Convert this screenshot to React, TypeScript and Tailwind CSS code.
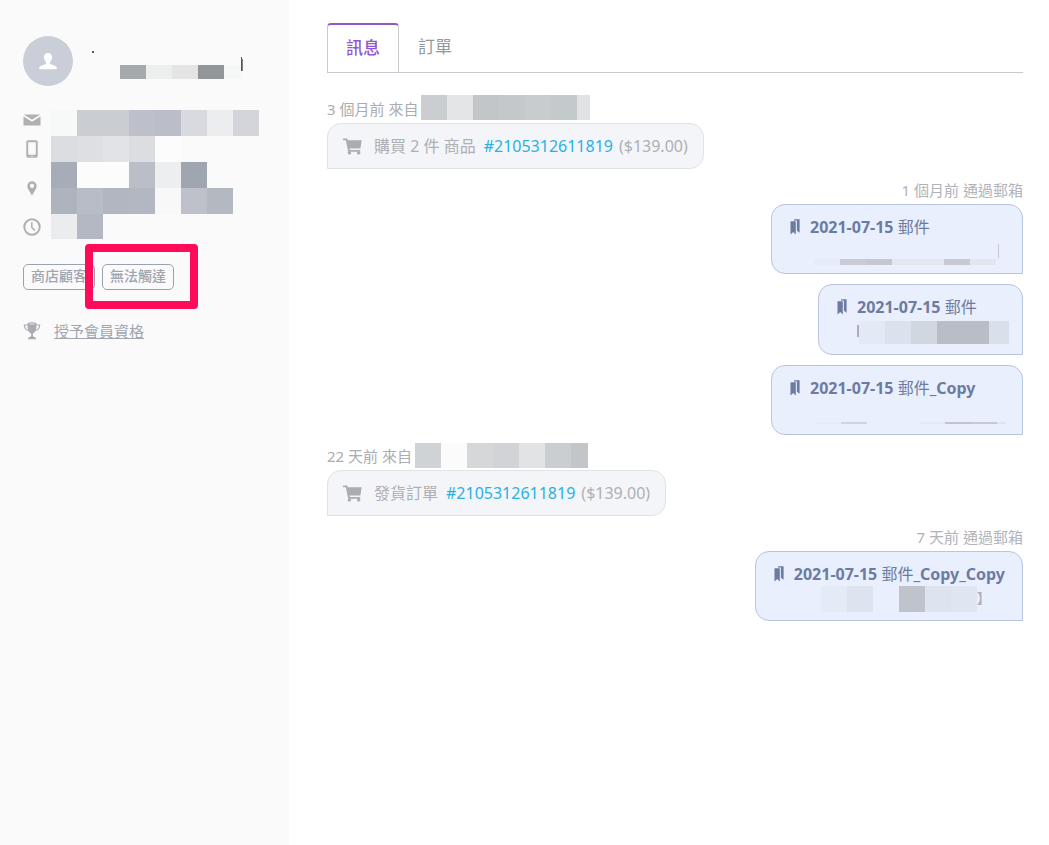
import type { ReactNode } from "react";

type Cell = [x: number, y: number, w: number, h: number, fill: string];

const nameCells: Cell[] = [
  [0, 0, 2, 2, "#55575b"],
  [28, 14, 26, 14, "#a6a9ad"],
  [54, 14, 26, 14, "#edefef"],
  [80, 14, 26, 14, "#e4e4e4"],
  [106, 14, 26, 14, "#929599"],
  [132, 14, 17, 14, "#f6f7f7"],
  [149, 6, 1, 14, "#55575b"],
  [150, 8, 1, 12, "#7d7f83"],
];

const contactCells: Cell[] = [
  [0, 0, 26, 26, "#f7f8f8"],
  [26, 0, 52, 26, "#cacdd1"],
  [78, 0, 26, 26, "#bdc0ca"],
  [104, 0, 26, 26, "#bbbec9"],
  [130, 0, 26, 26, "#d9dadf"],
  [156, 0, 26, 26, "#ecedef"],
  [182, 0, 26, 26, "#d4d5db"],
  [0, 26, 26, 26, "#dcdde1"],
  [26, 26, 26, 26, "#dedfe3"],
  [52, 26, 26, 26, "#e2e3e7"],
  [78, 26, 26, 26, "#dcdde1"],
  [104, 26, 26, 26, "#fcfcfc"],
  [0, 52, 26, 26, "#a6adb8"],
  [26, 52, 52, 26, "#fcfcfc"],
  [78, 52, 26, 26, "#b9bec7"],
  [104, 52, 26, 26, "#edeeef"],
  [130, 52, 26, 26, "#9fa6b0"],
  [0, 78, 26, 26, "#afb3bd"],
  [26, 78, 26, 26, "#b8bcc6"],
  [52, 78, 26, 26, "#b2b6c1"],
  [78, 78, 26, 26, "#b3b7c1"],
  [104, 78, 26, 26, "#f8f8f8"],
  [130, 78, 26, 26, "#bec1ca"],
  [156, 78, 26, 26, "#b3b8c1"],
  [0, 104, 26, 25, "#ebecee"],
  [26, 104, 26, 25, "#b3b8c2"],
];

const firstSource: Cell[] = [
  [0, 0, 26, 25, "#caced1"],
  [26, 0, 26, 25, "#e3e5e7"],
  [52, 0, 26, 25, "#c2c6c9"],
  [78, 0, 26, 25, "#c4c8cb"],
  [104, 0, 26, 25, "#c8cccf"],
  [130, 0, 26, 25, "#c4c9cc"],
  [156, 0, 13, 25, "#e0e2e4"],
];

const secondSource: Cell[] = [
  [0, 1, 26, 25, "#cfd3d6"],
  [26, 1, 26, 25, "#fbfbfb"],
  [52, 1, 26, 25, "#d6d7d9"],
  [78, 1, 26, 25, "#d2d3d6"],
  [104, 1, 26, 25, "#e2e3e5"],
  [130, 1, 26, 25, "#caced1"],
  [156, 1, 17, 25, "#c3c6c9"],
];

function Mosaic({ cells, width, height }: { cells: Cell[]; width: number; height: number }) {
  return (
    <svg width={width} height={height} className="block shrink-0 overflow-visible" shapeRendering="crispEdges" aria-hidden="true">
      {cells.map(([x, y, w, h, fill], i) => (
        <rect key={i} x={x} y={y} width={w} height={h} fill={fill} />
      ))}
    </svg>
  );
}

function PersonIcon() {
  return (
    <svg width="20" height="18" viewBox="0 0 20 18" fill="#fff" aria-hidden="true">
      <path d="M10 1c-2.600 0-4.100 1.700-4.100 4.200 0 1.900.9 4 2.200 5v1.600c-.3.700-5 1.500-6.300 3-.5.600-.8 1.600-.8 2.400h18c0-.8-.3-1.800-.8-2.400-1.300-1.500-6-2.300-6.300-3v-1.600c1.300-1 2.200-3.100 2.200-5C14.100 2.700 12.600 1 10 1z" />
    </svg>
  );
}

function MailIcon() {
  return (
    <svg width="18" height="12" viewBox="0 0 18 12" fill="currentColor" aria-hidden="true">
      <path d="M.8.500h16.400L9 5.800z" />
      <path d="M.5 2.400 9 7.800l8.500-5.400V11a.6.6 0 0 1-.6.600H1.100A.6.6 0 0 1 .5 11z" />
    </svg>
  );
}

function PhoneIcon() {
  return (
    <svg width="12" height="18" viewBox="0 0 12 18" fill="currentColor" aria-hidden="true">
      <path
        fillRule="evenodd"
        d="M2 .3h8A1.700 1.700 0 0 1 11.700 2v14a1.700 1.700 0 0 1-1.700 1.700H2A1.700 1.700 0 0 1 .3 16V2A1.700 1.700 0 0 1 2 .3zM2.200 2.200v12.600h7.600V2.200zM4.800 15.800v.8h2.400v-.8z"
      />
    </svg>
  );
}

function PinIcon() {
  return (
    <svg width="10" height="15" viewBox="0 0 10 15" fill="currentColor" aria-hidden="true">
      <path fillRule="evenodd" d="M5 .3A4.700 4.700 0 0 0 .3 5c0 3.300 3.200 6.400 4.700 9.700C6.500 11.400 9.700 8.300 9.700 5A4.700 4.700 0 0 0 5 .3zm0 2.500a2.100 2.100 0 1 1 0 4.200 2.100 2.100 0 0 1 0-4.200z" />
    </svg>
  );
}

function ClockIcon() {
  return (
    <svg width="18" height="18" viewBox="0 0 18 18" fill="none" stroke="currentColor" strokeWidth="2" aria-hidden="true">
      <circle cx="9" cy="9" r="7.700" />
      <path d="M8.800 4.200v5.300l3 2.800" strokeWidth="1.600" />
    </svg>
  );
}

function TrophyIcon() {
  return (
    <svg width="18" height="18" viewBox="0 0 18 18" fill="currentColor" aria-hidden="true">
      <path
        fillRule="evenodd"
        d="M4.600 1.200C5.600.500 7.200.300 9 .300s3.400.200 4.400.900v1.200h3.900c0 3.800-1.700 6-4.800 6.600-.6 1.300-1.400 2-2.600 2.500v2.600c0 .8 3 .9 3 2.400v.8H5.100v-.8c0-1.500 3-1.600 3-2.400v-2.600C6.900 11 6.100 10.300 5.500 9 2.400 8.400.7 6.200.7 2.400h3.900zM6 2c1 .5 5 .5 6 0-1-.6-5-.6-6 0zM1.900 3.500c.2 2.300 1.300 3.700 3.100 4.200-.3-1.200-.4-2.700-.4-4.200zm11.500 0c0 1.500-.1 3-.4 4.200 1.800-.5 2.900-1.900 3.100-4.200z"
      />
    </svg>
  );
}

function CartIcon() {
  return (
    <svg width="19" height="17" viewBox="0 0 19 17" fill="currentColor" aria-hidden="true">
      <path d="M0 .5h4.300l.5 1.700h13.900l-1.300 8.200H6.600l.3 1.500h10.300v1.900H5.200L2.800 2.200H0z" />
      <circle cx="6.400" cy="14.900" r="1.700" />
      <circle cx="15.700" cy="14.900" r="1.700" />
    </svg>
  );
}

function BookmarksIcon() {
  return (
    <svg width="10" height="16" viewBox="0 0 10 16" fill="currentColor" aria-hidden="true">
      <path d="M.5 2.300h5.300v13.200L3.200 12.900.500 15.500z" />
      <path d="M4 .3h5.600v13.500L6.900 11.700V1.600H4z" />
    </svg>
  );
}

function Meta({ children, right }: { children: ReactNode; right?: boolean }) {
  return (
    <div className={right ? "mt-[7px] flex h-7 items-center justify-end text-[#b0b3b7]" : "flex h-7 items-center gap-[3px] text-[#a9adb1]"}>
      {children}
    </div>
  );
}

function OrderBubble({ label, amount }: { label: string; amount: string }) {
  return (
    <div className="flex w-fit items-center rounded-[14px] rounded-bl-none border border-[#e0e2e7] bg-[#f4f5f8] px-[15px] py-[10px] text-base text-[#adb0b4]">
      <span className="mr-3 text-[#a9acb1]">
        <CartIcon />
      </span>
      <span>{label}</span>
      <a href="#order" className="mr-[6px] ml-2 text-[#29b1e6]">
        #2105312611819
      </a>
      <span>{amount}</span>
    </div>
  );
}

function MailBubble({ title, suffix, children }: { title: string; suffix?: string; children: ReactNode }) {
  return (
    <div className="flex w-fit items-start rounded-[14px] rounded-br-none border border-[#b7c5e0] bg-[#e9effc] py-[10px] pr-[17px] pl-[18px] text-base text-[#6c7ba1]">
      <span className="mt-1 mr-[10px] shrink-0">
        <BookmarksIcon />
      </span>
      <div>
        <p className="font-bold">
          {title} <span className="font-normal">郵件</span>
          {suffix}
        </p>
        {children}
      </div>
    </div>
  );
}

export default function App() {
  return (
    <div className="flex min-h-screen bg-white font-['Noto_Sans','Noto_Sans_CJK_TC',sans-serif] text-[15px] leading-6">
      <aside className="w-[289px] shrink-0 bg-[#fafafa] px-[23px] pt-9">
        <div className="flex items-start">
          <div className="flex size-[50px] items-center justify-center rounded-full bg-[#caced8]">
            <PersonIcon />
          </div>
          <div className="mt-[15px] ml-[19px]">
            <Mosaic cells={nameCells} width={151} height={28} />
          </div>
        </div>

        <div className="mt-6 flex gap-[10px]">
          <div className="flex w-[18px] flex-col items-center text-[#b0b0b0]">
            <span className="flex h-5 items-center"><MailIcon /></span>
            <span className="flex h-[38px] items-center"><PhoneIcon /></span>
            <span className="flex h-10 items-center"><PinIcon /></span>
            <span className="flex h-[38px] items-center"><ClockIcon /></span>
          </div>
          <Mosaic cells={contactCells} width={208} height={129} />
        </div>

        <div className="relative mt-[18px] flex gap-[7px] text-sm leading-5 font-medium text-[#a0a5b1]">
          <span className="rounded-[5px] border border-[#9aa2b1] px-[7px] pt-px pb-[3px]">商店顧客</span>
          <span className="rounded-[5px] border border-[#9aa2b1] px-[7px] pt-px pb-[3px]">無法觸達</span>
          <div className="absolute -top-5 left-[62px] h-[65px] w-[113px] rounded border-8 border-[#ff0b5a]" />
        </div>

        <div className="mt-[29px] flex items-center gap-[13px]">
          <span className="text-[#a9acb3]">
            <TrophyIcon />
          </span>
          <a href="#member" className="text-[#a0a5b1] underline">
            授予會員資格
          </a>
        </div>
      </aside>

      <main className="min-w-0 flex-1 pt-[23px] pr-[26px] pl-[38px]">
        <div role="tablist" className="flex border-b border-[#c5c7cc] text-[17px]">
          <button role="tab" aria-selected="true" className="h-[49px] w-[72px] rounded-t border-x border-t-2 border-x-[#c9cbd0] border-t-[#8e59cb] pb-[2px] font-medium text-[#9155d4]">
            訊息
          </button>
          <button role="tab" aria-selected="false" className="h-[49px] w-[72px] pb-[2px] text-[#94989c]">
            訂單
          </button>
        </div>

        <section className="mt-[22px]">
          <Meta>
            <span>3 個月前 來自</span>
            <Mosaic cells={firstSource} width={169} height={28} />
          </Meta>
          <OrderBubble label="購買 2 件 商品" amount="($139.00)" />
        </section>

        <section>
          <Meta right>1 個月前 通過郵箱</Meta>
          <div className="flex flex-col items-end gap-[10px]">
            <MailBubble title="2021-07-15">
              <Mosaic
                width={195}
                height={24}
                cells={[
                  [188, 5, 1, 14, "#c4c8d2"],
                  [4, 20, 26, 6, "#e7ecf9"],
                  [30, 20, 26, 6, "#c8cbd5"],
                  [56, 20, 26, 6, "#c5c8d2"],
                  [82, 20, 52, 6, "#e2e7f2"],
                  [134, 20, 26, 6, "#c7cad4"],
                  [160, 20, 26, 6, "#e1e6f1"],
                ]}
              />
            </MailBubble>
            <MailBubble title="2021-07-15">
              <Mosaic
                width={148}
                height={25}
                cells={[
                  [0, 6, 2, 12, "#a9adb6"],
                  [2, 2, 26, 23, "#e3eaf6"],
                  [28, 2, 26, 23, "#dbe2ed"],
                  [54, 2, 26, 23, "#d0d7df"],
                  [80, 2, 52, 23, "#b9bdc6"],
                  [132, 2, 20, 23, "#d9e0ea"],
                ]}
              />
            </MailBubble>
            <MailBubble title="2021-07-15" suffix="_Copy">
              <Mosaic
                width={195}
                height={24}
                cells={[
                  [5, 22, 26, 2, "#e5ebf7"],
                  [31, 22, 26, 2, "#ced5dd"],
                  [109, 22, 26, 2, "#e3e9f5"],
                  [135, 22, 26, 2, "#bfc4ce"],
                  [161, 22, 26, 2, "#c5cad3"],
                  [187, 22, 9, 2, "#dfe5f0"],
                ]}
              />
            </MailBubble>
          </div>
        </section>

        <section className="mt-[7px]">
          <Meta>
            <span>22 天前 來自</span>
            <Mosaic cells={secondSource} width={173} height={28} />
          </Meta>
          <OrderBubble label="發貨訂單" amount="($139.00)" />
        </section>

        <section>
          <Meta right>7 天前 通過郵箱</Meta>
          <div className="flex flex-col items-end">
            <MailBubble title="2021-07-15" suffix="_Copy_Copy">
              <div className="flex h-6 items-center text-sm text-[#adb0b4]">
                <Mosaic
                  width={183}
                  height={24}
                  cells={[
                    [27, 0, 26, 26, "#e4eaf6"],
                    [53, 0, 26, 26, "#dde4ef"],
                    [105, 0, 26, 26, "#bfc3cb"],
                    [131, 0, 26, 26, "#dee4ef"],
                    [157, 0, 26, 26, "#dfe5f1"],
                  ]}
                />
                <span>】</span>
              </div>
            </MailBubble>
          </div>
        </section>
      </main>
    </div>
  );
}
